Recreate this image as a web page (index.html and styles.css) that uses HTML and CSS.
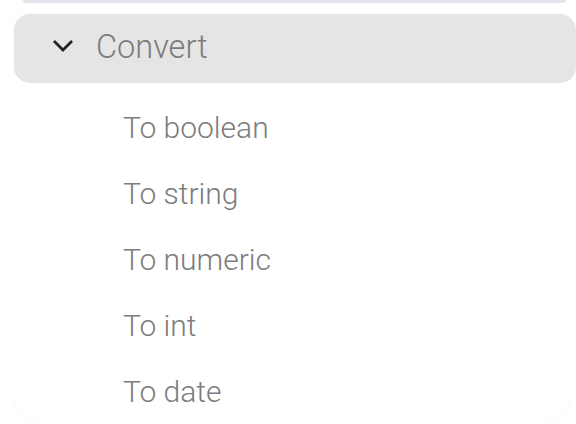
FILE: index.html
```html
<!DOCTYPE html>
<html>
<head>
<meta charset="utf-8">
<link rel="stylesheet" href="styles.css">
</head>
<body>
<div class="prev"></div>
<div class="panel">
  <div class="header">
    <svg class="chev" width="22" height="14" viewBox="0 0 22 14"><path d="M2 2 L11 11 L20 2" fill="none" stroke="#222" stroke-width="2.8"/></svg>
    <span class="title">Convert</span>
  </div>
  <ul class="items">
    <li>To boolean</li>
    <li>To string</li>
    <li>To numeric</li>
    <li>To int</li>
    <li>To date</li>
  </ul>
</div>
</body>
</html>
```
FILE: styles.css
```css
html, body { margin: 0; padding: 0; background: #fff; }
body { width: 576px; height: 424px; overflow: hidden; font-family: Roboto, "Liberation Sans", sans-serif; }
.prev { height: 3px; margin: 0 10px 0 23px; background: #e1e5e9; border-radius: 0 0 3px 3px; }
.panel { margin: 11px 6px 0 14px; height: 409px; border-radius: 0 0 22px 22px; box-shadow: 0 0 1px rgba(0,0,0,0.12); position: relative; }
.header { height: 69px; margin-right: -6px; background: #e5e5e5; border-radius: 16px; display: flex; align-items: center; }
.chev { margin-left: 38px; margin-top: -6px; }
.title { margin-left: 22px; font-size: 32.5px; font-weight: 300; color: #7c7c7c; margin-top: -4px; }
.items { list-style: none; margin: 12px 0 0; padding: 0 0 0 109px; }
.items li { height: 66px; line-height: 66px; font-size: 30px; font-weight: 300; color: #7c7c7c; }
```
